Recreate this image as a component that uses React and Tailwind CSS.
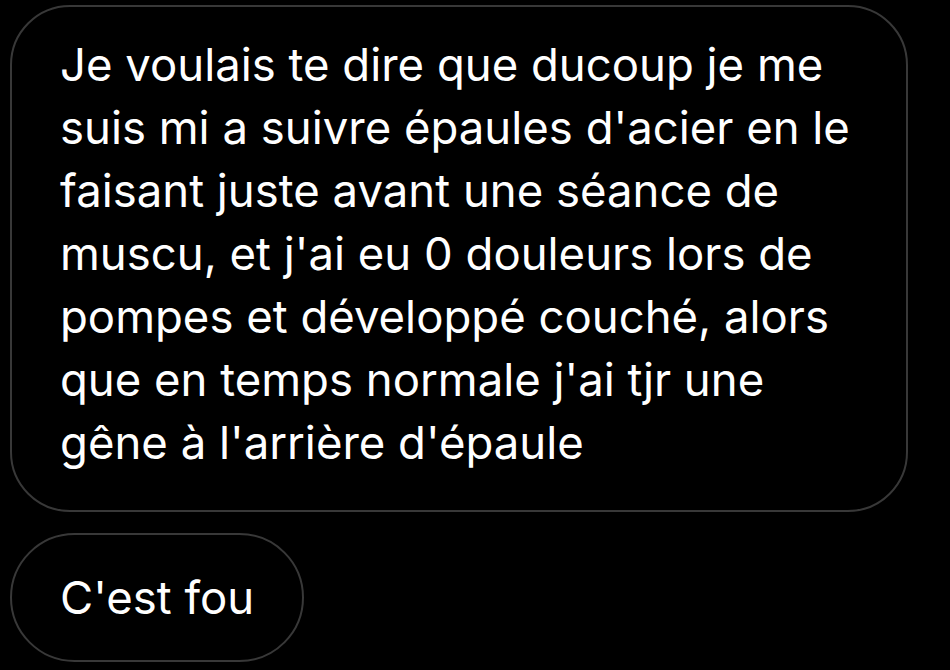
export default function App() {
  const lines = [
    "Je voulais te dire que ducoup je me",
    "suis mi a suivre épaules d'acier en le",
    "faisant juste avant une séance de",
    "muscu, et j'ai eu 0 douleurs lors de",
    "pompes et développé couché, alors",
    "que en temps normale j'ai tjr une",
    "gêne à l'arrière d'épaule",
  ];
  return (
    <div className="w-[950px] h-[670px] bg-black overflow-hidden font-['Inter','Roboto',sans-serif] text-white">
      <div className="flex flex-col items-start pl-[10px] pt-[5px] gap-[21px]">
        <div className="w-[898px] h-[507px] rounded-[60px] border-2 border-[#383838] pl-[48px] pt-[26px]">
          {lines.map((l) => (
            <div key={l} className="text-[45.5px] leading-[63px] whitespace-nowrap">{l}</div>
          ))}
        </div>
        <div className="h-[129px] rounded-full border-2 border-[#383838] px-[48px] flex items-center">
          <span className="text-[45.5px] leading-[63px]">C'est fou</span>
        </div>
      </div>
    </div>
  );
}
